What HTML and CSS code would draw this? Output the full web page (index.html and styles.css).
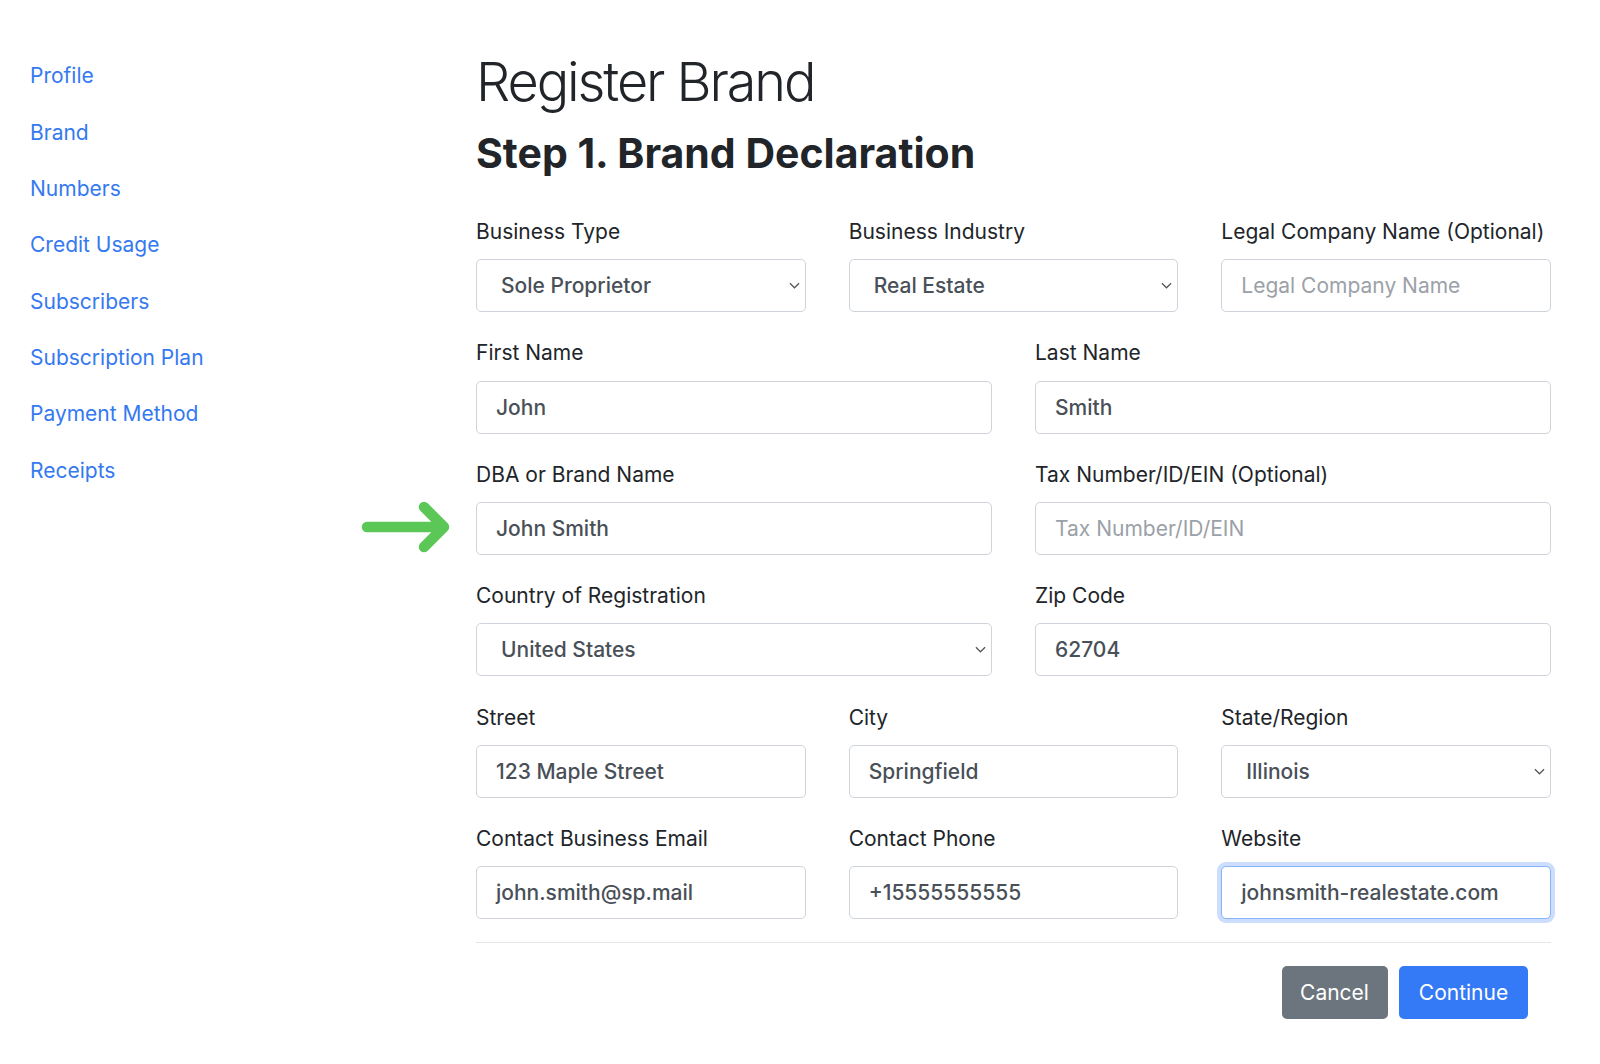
FILE: index.html
```html
<!DOCTYPE html>
<html lang="en">
<head>
<meta charset="utf-8">
<title>Register Brand</title>
<link rel="stylesheet" href="styles.css">
</head>
<body>
<div class="page">
  <nav class="sidebar">
    <a href="#">Profile</a>
    <a href="#">Brand</a>
    <a href="#">Numbers</a>
    <a href="#">Credit Usage</a>
    <a href="#">Subscribers</a>
    <a href="#">Subscription Plan</a>
    <a href="#">Payment Method</a>
    <a href="#">Receipts</a>
  </nav>
  <main class="main">
    <h1 class="title">Register Brand</h1>
    <h2 class="step">Step 1. Brand Declaration</h2>
    <form class="form">
      <div class="row row-3">
        <div class="group">
          <label>Business Type</label>
          <div class="control select"><span>Sole Proprietor</span><svg class="chev" viewBox="0 0 12 7"><path d="M1 1l5 5 5-5"/></svg></div>
        </div>
        <div class="group">
          <label>Business Industry</label>
          <div class="control select"><span>Real Estate</span><svg class="chev" viewBox="0 0 12 7"><path d="M1 1l5 5 5-5"/></svg></div>
        </div>
        <div class="group">
          <label>Legal Company Name (Optional)</label>
          <div class="control placeholder">Legal Company Name</div>
        </div>
      </div>
      <div class="row row-2">
        <div class="group">
          <label>First Name</label>
          <div class="control">John</div>
        </div>
        <div class="group">
          <label>Last Name</label>
          <div class="control">Smith</div>
        </div>
      </div>
      <div class="row row-2">
        <div class="group">
          <label>DBA or Brand Name</label>
          <div class="control-wrap">
            <svg class="arrow" viewBox="0 0 100 65"><path d="M12 32H89M69 12l20 20-20 20"/></svg>
            <div class="control">John Smith</div>
          </div>
        </div>
        <div class="group">
          <label>Tax Number/ID/EIN (Optional)</label>
          <div class="control placeholder">Tax Number/ID/EIN</div>
        </div>
      </div>
      <div class="row row-2">
        <div class="group">
          <label>Country of Registration</label>
          <div class="control select"><span>United States</span><svg class="chev" viewBox="0 0 12 7"><path d="M1 1l5 5 5-5"/></svg></div>
        </div>
        <div class="group">
          <label>Zip Code</label>
          <div class="control">62704</div>
        </div>
      </div>
      <div class="row row-3">
        <div class="group">
          <label>Street</label>
          <div class="control">123 Maple Street</div>
        </div>
        <div class="group">
          <label>City</label>
          <div class="control">Springfield</div>
        </div>
        <div class="group">
          <label>State/Region</label>
          <div class="control select"><span>Illinois</span><svg class="chev" viewBox="0 0 12 7"><path d="M1 1l5 5 5-5"/></svg></div>
        </div>
      </div>
      <div class="row row-3">
        <div class="group">
          <label>Contact Business Email</label>
          <div class="control">john.smith@sp.mail</div>
        </div>
        <div class="group">
          <label>Contact Phone</label>
          <div class="control">+15555555555</div>
        </div>
        <div class="group">
          <label>Website</label>
          <div class="control focus">johnsmith-realestate.com</div>
        </div>
      </div>
      <div class="footer">
        <button type="button" class="btn btn-gray">Cancel</button>
        <button type="button" class="btn btn-blue">Continue</button>
      </div>
    </form>
  </main>
</div>
</body>
</html>
```
FILE: styles.css
```css
* { box-sizing: border-box; }
html, body { margin: 0; padding: 0; background: #fff; }
body {
  font-family: Inter, "Noto Sans", "Liberation Sans", sans-serif;
  color: #212529;
}
.page {
  display: flex;
  width: 1600px;
}
.sidebar {
  width: 476px;
  flex: none;
  padding: 48px 0 0 30px;
  display: flex;
  flex-direction: column;
  align-items: flex-start;
}
.sidebar a {
  color: #3579f0;
  text-decoration: none;
  font-size: 21px;
  line-height: 32px;
  padding: 12.2px 0;
}
.main {
  width: 1075px;
  flex: none;
}
.title {
  margin: 49px 0 0;
  font-size: 54px;
  font-weight: 300;
  line-height: 65px;
  color: #212529;
  letter-spacing: -2.1px;
}
.step {
  margin: 14px 0 0;
  font-size: 41px;
  font-weight: 700;
  line-height: 50px;
  color: #212529;
  letter-spacing: 0;
}
.form {
  margin-top: 38px;
}
.row {
  display: grid;
  column-gap: 43px;
  margin-bottom: 25.2px;
}
.row-3 { grid-template-columns: 1fr 1fr 1fr; }
.row-2 { grid-template-columns: 1fr 1fr; }
.group label {
  display: block;
  font-size: 21px;
  line-height: 31.5px;
  margin-bottom: 11.7px;
  color: #212529;
}
.control-wrap { position: relative; }
.control {
  height: 53px;
  border: 1px solid #ced4da;
  border-radius: 5px;
  padding: 0 19px;
  display: flex;
  align-items: center;
  font-size: 21px;
  font-weight: 500;
  color: #495057;
  background: #fff;
}
.control.placeholder {
  color: #9ba1a8;
  font-weight: 400;
}
.control.select {
  padding: 0 5px 0 24px;
  justify-content: space-between;
}
.chev {
  width: 11px;
  height: 7px;
  fill: none;
  stroke: #555;
  stroke-width: 1.3;
}
.control.focus {
  border-color: #86b4f8;
  box-shadow: 0 0 0 4px rgba(52, 120, 246, 0.25);
}
.arrow {
  position: absolute;
  left: -121px;
  top: -7px;
  width: 100px;
  height: 65px;
  fill: none;
  stroke: #5bc756;
  stroke-width: 10.5;
  stroke-linecap: round;
  stroke-linejoin: round;
}
.footer {
  border-top: 1px solid #e4e6e8;
  margin-top: -2px;
  padding: 23px 23px 0 0;
  display: flex;
  justify-content: flex-end;
  gap: 11.5px;
}
.btn {
  height: 53px;
  border: none;
  border-radius: 5px;
  padding: 0;
  text-align: center;
  font-family: Inter, "Noto Sans", "Liberation Sans", sans-serif;
  font-size: 21px;
  font-weight: 400;
  color: #fff;
}
.btn-gray { background: #6c757d; width: 106px; }
.btn-blue { background: #3479f6; width: 129px; }
```
